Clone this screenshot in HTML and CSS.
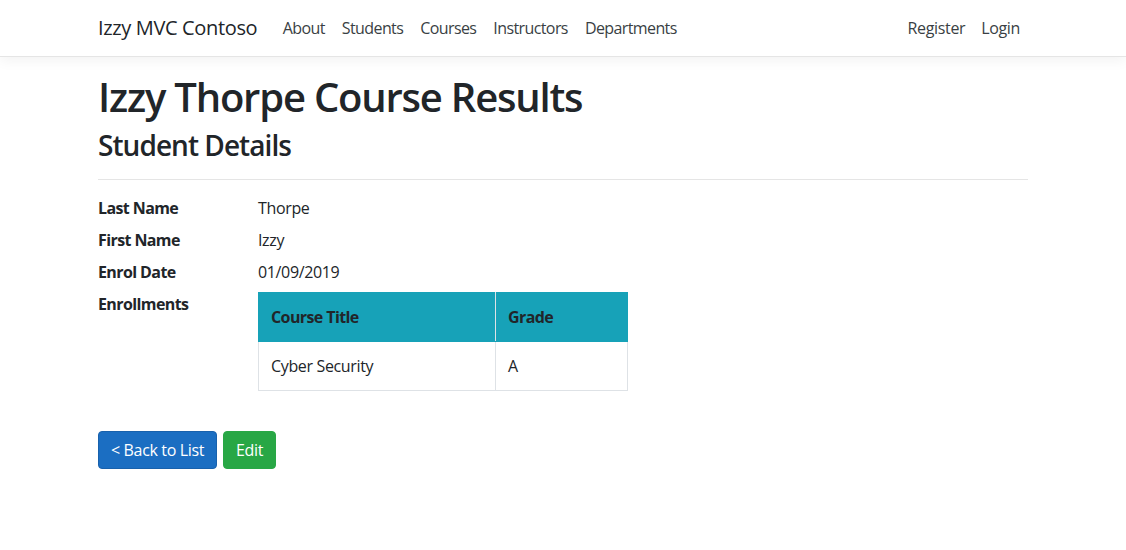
FILE: index.html
```html
<!DOCTYPE html>
<html lang="en">
<head>
<meta charset="utf-8">
<title>Izzy Thorpe Course Results - Izzy MVC Contoso</title>
<link rel="stylesheet" href="styles.css">
</head>
<body>
<header>
  <nav class="navbar">
    <div class="container nav-inner">
      <a class="brand" href="#">Izzy MVC Contoso</a>
      <ul class="nav-links">
        <li><a href="#">About</a></li>
        <li><a href="#">Students</a></li>
        <li><a href="#">Courses</a></li>
        <li><a href="#">Instructors</a></li>
        <li><a href="#">Departments</a></li>
      </ul>
      <ul class="nav-links nav-right">
        <li><a href="#">Register</a></li>
        <li><a href="#">Login</a></li>
      </ul>
    </div>
  </nav>
</header>
<main class="container">
  <h1 class="title">Izzy Thorpe Course Results</h1>
  <h2 class="subtitle">Student Details</h2>
  <hr class="divider">
  <dl class="details">
    <dt>Last Name</dt><dd>Thorpe</dd>
    <dt>First Name</dt><dd>Izzy</dd>
    <dt>Enrol Date</dt><dd>01/09/2019</dd>
    <dt>Enrollments</dt>
    <dd>
      <table class="enrol-table">
        <thead>
          <tr><th class="col-title">Course Title</th><th class="col-grade">Grade</th></tr>
        </thead>
        <tbody>
          <tr><td>Cyber Security</td><td>A</td></tr>
        </tbody>
      </table>
    </dd>
  </dl>
  <div class="actions">
    <a class="btn btn-primary" href="#">&lt; Back to List</a>
    <a class="btn btn-success" href="#">Edit</a>
  </div>
</main>
</body>
</html>
```
FILE: styles.css
```css
* { box-sizing: border-box; }
html, body { margin: 0; padding: 0; }
body {
  font-family: "Open Sans", "Noto Sans", "Liberation Sans", sans-serif;
  font-size: 16px;
  line-height: 1.5;
  color: #212529;
  background: #fff;
  letter-spacing: -0.35px;
}
a { text-decoration: none; }
.container {
  width: 960px;
  margin: 0 auto;
  padding: 0 15px;
}
.navbar {
  background: #fff;
  border-bottom: 1px solid #e5e5e5;
  box-shadow: 0 4px 12px rgba(0,0,0,.05);
  height: 57px;
  margin-bottom: 16px;
}
.nav-inner {
  display: flex;
  align-items: center;
  height: 56px;
}
.brand {
  font-size: 20px;
  color: #212529;
  margin-right: 17px;
  line-height: 30px;
}
.nav-links {
  display: flex;
  list-style: none;
  margin: 0;
  padding: 0;
}
.nav-links a {
  display: block;
  padding: 8px 8.5px;
  color: #3a3f44;
  font-size: 16px;
  letter-spacing: -0.6px;
}
.nav-right { margin-left: auto; }
.nav-right a { padding: 8px; letter-spacing: -0.35px; }
.title {
  font-size: 40px;
  font-weight: 600;
  line-height: 1.2;
  margin: 0 0 8px;
  letter-spacing: -1.2px;
}
.subtitle {
  font-size: 28px;
  font-weight: 600;
  line-height: 1.2;
  margin: 0;
  letter-spacing: -0.95px;
}
.divider {
  border: 0;
  border-top: 1px solid rgba(0,0,0,.1);
  margin: 16px 0;
}
.details {
  display: grid;
  grid-template-columns: 160px 1fr;
  margin: 0 0 16px;
}
.details dt {
  font-weight: 700;
  margin-bottom: 8px;
  letter-spacing: -0.6px;
}
.details dd {
  margin: 0 0 8px;
}
.enrol-table {
  border-collapse: collapse;
  margin-bottom: 16px;
}
.enrol-table th, .enrol-table td {
  border: 1px solid #dee2e6;
  padding: 12px;
  text-align: left;
  vertical-align: top;
}
.enrol-table th {
  background: #17a2b8;
  border-color: #17a2b8;
  border-right-color: #dee2e6;
  font-weight: 700;
  letter-spacing: -0.6px;
}
.enrol-table th:last-child { border-right-color: #17a2b8; }
.col-title { width: 237px; }
.col-grade { width: 132px; }
.actions { display: flex; gap: 6px; }
.btn {
  display: inline-block;
  padding: 6px 12px;
  font-size: 16px;
  line-height: 1.5;
  border-radius: 4px;
  border: 1px solid transparent;
  color: #fff;
}
.btn-primary { background: #1b6ec2; border-color: #1861ac; }
.btn-success { background: #28a745; border-color: #28a745; }
```
